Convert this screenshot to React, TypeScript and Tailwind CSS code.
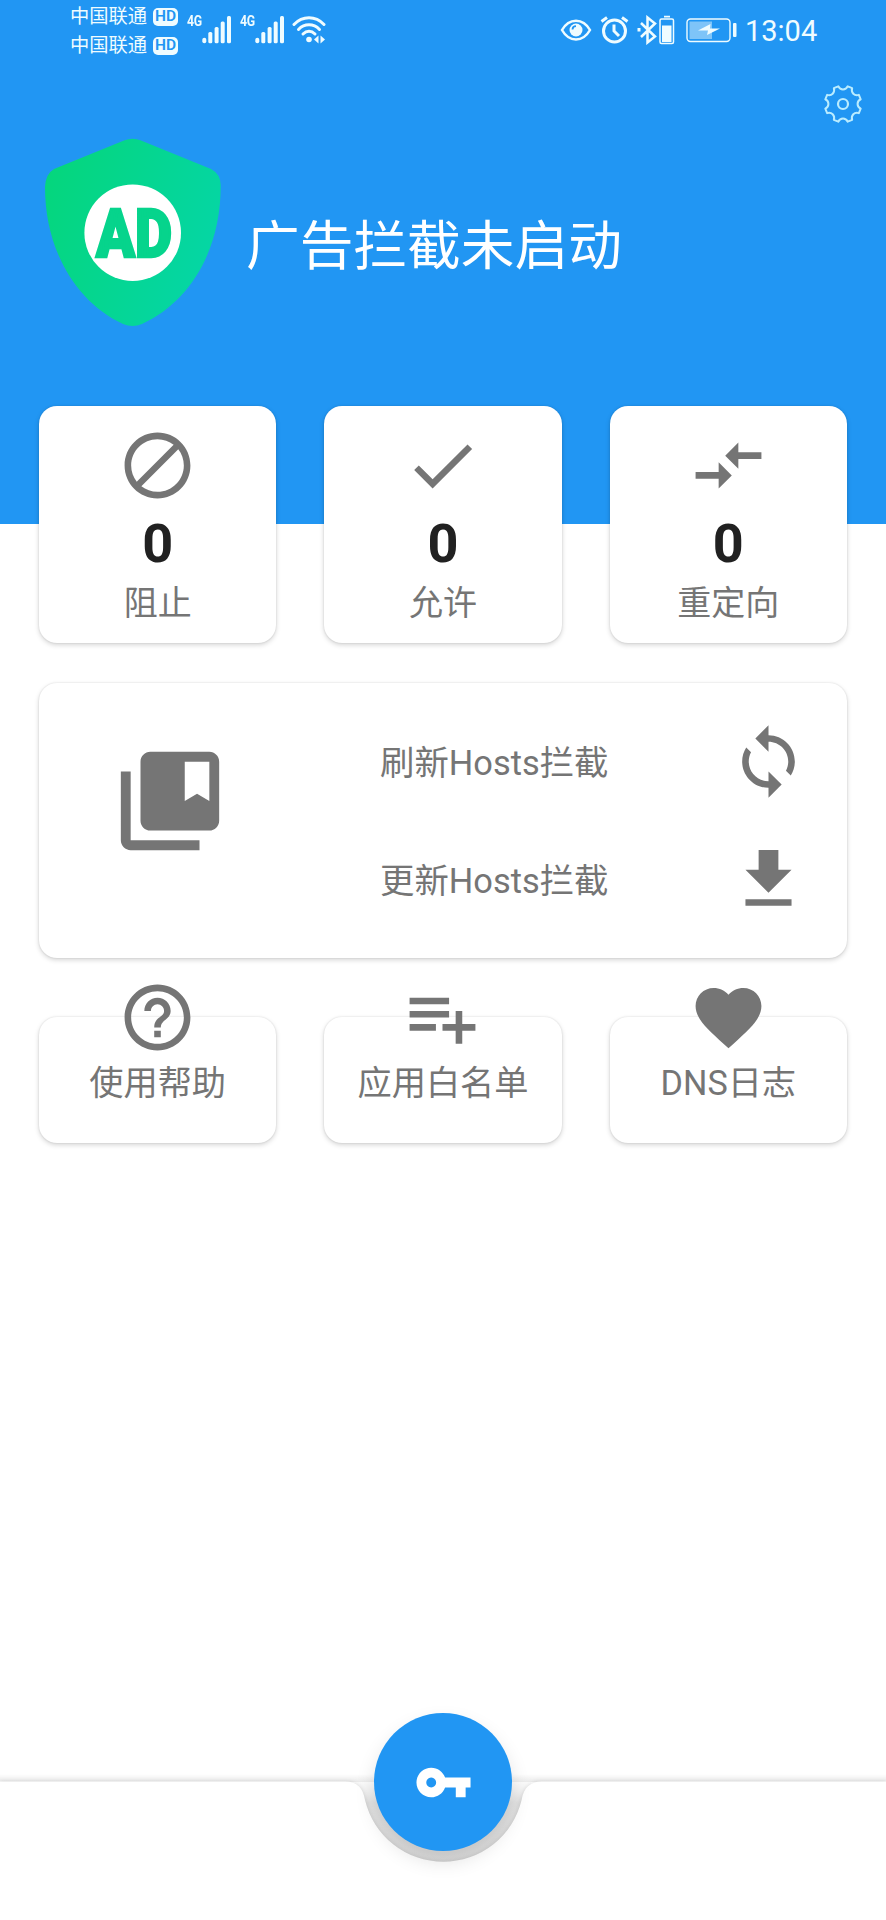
import React from 'react';

const FONT = "font-[Roboto,'Noto_Sans_CJK_SC',sans-serif]";
const CARD = 'bg-white rounded-[18px] shadow-[0_0_2px_rgba(0,0,0,0.12),0_2px_5px_rgba(0,0,0,0.17)]';

const PATHS = {
    block: 'M12 2C6.48 2 2 6.48 2 12s4.48 10 10 10 10-4.48 10-10S17.52 2 12 2zM4 12c0-4.42 3.58-8 8-8 1.85 0 3.55.63 4.9 1.69L5.69 16.9C4.63 15.55 4 13.85 4 12zm8 8c-1.85 0-3.55-.63-4.9-1.69L18.31 7.1C19.37 8.45 20 10.15 20 12c0 4.42-3.58 8-8 8z',
    check: 'M9 16.2L4.8 12l-1.4 1.4L9 19 21 7l-1.4-1.4L9 16.2z',
    compare: 'M9.01 14H2v2h7.01v3L13 15l-3.99-4v3zm5.98-1v-3H22V8h-7.01V5L11 9l3.99 4z',
    bookmarks:
        'M4 6H2v14c0 1.1.9 2 2 2h14v-2H4V6zm16-4H8c-1.1 0-2 .9-2 2v12c0 1.1.9 2 2 2h12c1.1 0 2-.9 2-2V4c0-1.1-.9-2-2-2zm0 10l-2.5-1.5L15 12V4h5v8z',
    sync: 'M12 4V1L8 5l4 4V6c3.31 0 6 2.69 6 6 0 1.01-.25 1.97-.7 2.8l1.46 1.46C19.54 15.03 20 13.57 20 12c0-4.42-3.58-8-8-8zm0 14c-3.31 0-6-2.69-6-6 0-1.01.25-1.97.7-2.8L5.24 7.74C4.46 8.97 4 10.43 4 12c0 4.42 3.58 8 8 8v3l4-4-4-4v3z',
    download: 'M19 9h-4V3H9v6H5l7 7 7-7zM5 18v2h14v-2H5z',
    help: 'M11 18h2v-2h-2v2zm1-16C6.48 2 2 6.48 2 12s4.48 10 10 10 10-4.48 10-10S17.52 2 12 2zm0 18c-4.41 0-8-3.59-8-8s3.59-8 8-8 8 3.59 8 8-3.59 8-8 8zm0-14c-2.21 0-4 1.79-4 4h2c0-1.1.9-2 2-2s2 .9 2 2c0 2-3 1.75-3 5h2c0-2.25 3-2.5 3-5 0-2.21-1.79-4-4-4z',
    playlistAdd: 'M14 10H2v2h12v-2zm0-4H2v2h12V6zm4 8v-4h-2v4h-4v2h4v4h2v-4h4v-2h-4zM2 16h8v-2H2v2z',
    heart: 'M12 21.35l-1.45-1.32C5.4 15.36 2 12.28 2 8.5 2 5.42 4.42 3 7.5 3c1.74 0 3.41.81 4.5 2.09C13.09 3.81 14.76 3 16.5 3 19.58 3 22 5.42 22 8.5c0 3.78-3.4 6.86-8.55 11.54L12 21.35z',
    key: 'M12.65 10C11.83 7.67 9.61 6 7 6c-3.31 0-6 2.69-6 6s2.69 6 6 6c2.61 0 4.83-1.67 5.65-4H17v4h4v-4h2v-4H12.65zM7 14c-1.1 0-2-.9-2-2s.9-2 2-2 2 .9 2 2-.9 2-2 2z',
};

const Icon = ({ name, className = 'size-[79px]' }: { name: keyof typeof PATHS; className?: string }) => (
    <svg viewBox="0 0 24 24" fill="currentColor" className={`shrink-0 ${className}`}>
        <path d={PATHS[name]} />
    </svg>
);

// eight rounded teeth with scooped gaps between them
const gearPath = () => {
    const point = (deg: number, r: number) => {
        const a = (deg * Math.PI) / 180;
        return `${(20 + r * Math.sin(a)).toFixed(2)} ${(20 - r * Math.cos(a)).toFixed(2)}`;
    };
    let d = `M${point(15, 18.3)}`;
    for (let k = 0; k < 8; k++) {
        const base = k * 45;
        d += ` L${point(base + 30, 18.3)}`;
        d += ` C${point(base + 34, 13.8)} ${point(base + 56, 13.8)} ${point(base + 60, 18.3)}`;
    }
    return `${d}Z`;
};

const Signal = () => (
    <div className="flex w-[45px]">
        <span className="-mt-1 w-[15px] text-[15px] font-bold leading-5 tracking-[-0.5px]">
            <span className="inline-block origin-left scale-x-[.82]">4G</span>
        </span>
        <svg width="30" height="30" viewBox="15 0 30 30" fill="currentColor" className="shrink-0">
            <rect x="15.3" y="22.7" width="4" height="5.6" rx="2" />
            <rect x="21.3" y="17" width="4" height="11.3" rx="1.5" />
            <rect x="27.6" y="12" width="4" height="16.3" rx="1.5" />
            <rect x="33.7" y="6.6" width="4" height="21.7" rx="1.5" />
            <rect x="40" y="1" width="4" height="27.3" rx="1.5" />
        </svg>
    </div>
);

const StatusBar = () => (
    <div className="flex h-[60px] pl-[70px] text-[#effcff]">
        <div className="flex flex-col gap-px pt-[3px]">
            {[1, 2].map((sim) => (
                <div key={sim} className="flex h-7 items-center">
                    <span className="w-[83px] text-[19.3px] leading-7">中国联通</span>
                    <span className="flex h-[17.5px] w-[25px] items-center justify-center rounded-[5px] bg-[#effcff] text-[15.5px] font-semibold leading-none text-[#2196f3]">
                        HD
                    </span>
                </div>
            ))}
        </div>
        <div className="ml-[9px] flex gap-2 pt-[15px]">
            <Signal />
            <Signal />
        </div>
        <svg className="ml-[7px] mt-[15px]" width="34" height="30" viewBox="0 0 34 30" fill="none" stroke="currentColor" strokeWidth="3" strokeLinecap="round">
            <path d="M2 9.5C10.500 .5 23.500 .5 32 9.500" />
            <path d="M6.500 14.500C12.500 8.300 21.500 8.300 27.500 14.500" />
            <path d="M11 19C14.800 15.200 19.200 15.200 23 19" />
            <circle cx="17" cy="24.500" r="2.800" fill="currentColor" stroke="none" />
            <path d="M22 24.500l4.500-4v8zM33 24.500l-4.500-4v8z" fill="currentColor" stroke="none" />
        </svg>
        <svg className="ml-[234px] mt-[15px]" width="115" height="30" viewBox="0 0 115 30" fill="none" stroke="currentColor" strokeWidth="2.500">
            <path d="M2 15C9 2.500 23 2.500 30 15C23 27.500 9 27.500 2 15Z" />
            <circle cx="16" cy="15" r="6.500" fill="currentColor" stroke="none" />
            <path d="M12.500 14.500A3.500 3.500 0 0 1 16 11.200" stroke="#2196f3" strokeWidth="1.800" />
            <circle cx="54.500" cy="16" r="11" strokeWidth="3" />
            <path d="M54 9.500V16l5 5M41.500 6.500l5.500-4M67.500 6.500l-5.500-4" strokeWidth="3" />
            <path d="M81 8l14 13.500-7.500 6V2.500l7.500 6L81 22" />
            <path d="M77.500 13h3v3.500h-3z" fill="currentColor" stroke="none" />
            <rect x="100" y="4" width="13.500" height="24.500" rx="1.500" strokeWidth="1.500" />
            <path d="M104 .7h6v1.800h-6zM102 10.500h9.500v16.500H102z" fill="currentColor" stroke="none" />
        </svg>
        <svg className="ml-[10px] mt-[15px]" width="52" height="30" viewBox="0 0 52 30" fill="currentColor">
            <rect x="2" y="4" width="43" height="22.500" rx="3.500" fill="none" stroke="currentColor" strokeWidth="1.400" />
            <rect x="4.500" y="6.500" width="22.500" height="17.500" opacity=".45" />
            <path d="M13 15.500l12.500-6.500-.5 4.500h10l-13 6.500 1-4.500z" />
            <rect x="48" y="8" width="3.500" height="14" rx="1" />
        </svg>
        <span className="ml-[8px] pt-[14px] text-[29px] leading-[34px]">13:04</span>
    </div>
);

const Shield = () => (
    <svg width="178" height="190" viewBox="0 0 178 190" className="shrink-0">
        <defs>
            <linearGradient id="shield" x1="0" y1=".2" x2="1" y2=".6">
                <stop offset="0" stopColor="#05d67c" />
                <stop offset="1" stopColor="#05d6a6" />
            </linearGradient>
        </defs>
        <path
            d="M80 2.500Q88.700-1 97 2.500L167 31Q176.500 36 176.700 47C177 112 146 164 98 186Q88.700 190 79 186C32 164 1 112 1 49Q1.500 36 10 31Z"
            fill="url(#shield)"
        />
        <circle cx="88.700" cy="94.700" r="48.300" fill="#fff" />
        <text x="52" y="118.500" fontSize="67" fontWeight="900" fill="#06d48c" stroke="#06d48c" strokeWidth="2.500" textLength="76" lengthAdjust="spacingAndGlyphs">
            AD
        </text>
    </svg>
);

const App = () => {
    const stats: { icon: keyof typeof PATHS; count: number; label: string }[] = [
        { icon: 'block', count: 0, label: '阻止' },
        { icon: 'check', count: 0, label: '允许' },
        { icon: 'compare', count: 0, label: '重定向' },
    ];

    const hostActions: { icon: keyof typeof PATHS; label: string }[] = [
        { icon: 'sync', label: '刷新Hosts拦截' },
        { icon: 'download', label: '更新Hosts拦截' },
    ];

    const links: { icon: keyof typeof PATHS; label: string }[] = [
        { icon: 'help', label: '使用帮助' },
        { icon: 'playlistAdd', label: '应用白名单' },
        { icon: 'heart', label: 'DNS日志' },
    ];

    return (
        <div className={`flex h-[1920px] w-[886px] flex-col overflow-hidden bg-white text-[#757575] ${FONT}`}>
            <header className="h-[524px] shrink-0 bg-[#2196f3] text-white">
                <StatusBar />
                <div className="flex justify-end pr-[23px] pt-6">
                    <svg width="40" height="40" viewBox="0 0 40 40" fill="none" stroke="#b9ecff" strokeWidth="2">
                        <path d={gearPath()} strokeLinejoin="round" />
                        <circle cx="20" cy="20" r="5" strokeWidth="2.200" />
                    </svg>
                </div>
                <div className="mt-[14px] flex pl-[44px]">
                    <Shield />
                    <h1 className="ml-6 mt-[69px] text-[53.700px] leading-[80px]">广告拦截未启动</h1>
                </div>
            </header>

            <main className="relative -mt-[118px] flex flex-col px-[39px]">
                <section className="grid grid-cols-3 gap-x-[48px]">
                    {stats.map((item) => (
                        <div key={item.label} className={`flex h-[237px] flex-col items-center pt-5 ${CARD}`}>
                            <Icon name={item.icon} />
                            <span className="mt-[7px] text-[54px] font-bold leading-[64px] text-[#212121]">{item.count}</span>
                            <span className="mt-[2px] text-[34px] leading-[50px]">{item.label}</span>
                        </div>
                    ))}
                </section>

                <section className={`mt-[40px] flex h-[275px] pl-[72px] ${CARD}`}>
                    <Icon name="bookmarks" className="mt-[58.500px] size-[118px]" />
                    <div className="ml-[151px] mt-[39px] flex flex-1 flex-col gap-[39px] pr-[39px]">
                        {hostActions.map((item) => (
                            <div key={item.label} className="flex h-[79px] items-center justify-between">
                                <span className="pt-[2px] text-[34.400px] leading-[50px]">{item.label}</span>
                                <Icon name={item.icon} />
                            </div>
                        ))}
                    </div>
                </section>

                <section className="mt-[59px] grid grid-cols-3 gap-x-[48px]">
                    {links.map((item) => (
                        <div key={item.label} className={`flex h-[126px] flex-col items-center ${CARD}`}>
                            <Icon name={item.icon} className="-mt-[39.500px] size-[79px]" />
                            <span className="pt-px text-[34.200px] leading-[50px]">{item.label}</span>
                        </div>
                    ))}
                </section>
            </main>

            <footer className="relative mt-auto h-[220px] shrink-0">
                <svg width="886" height="220" viewBox="0 0 886 220">
                    <defs>
                        <linearGradient id="notch" x1="0" y1="0" x2="0" y2="1">
                            <stop offset="0" stopColor="#f0f0f0" stopOpacity="0" />
                            <stop offset=".3" stopColor="#e2e2e2" />
                            <stop offset="1" stopColor="#dedede" />
                        </linearGradient>
                        <linearGradient id="edge" x1="0" y1="0" x2="0" y2="1">
                            <stop offset="0" stopColor="#000" stopOpacity="0" />
                            <stop offset="1" stopColor="#000" stopOpacity=".08" />
                        </linearGradient>
                    </defs>
                    <rect x="0" y="74" width="886" height="8" fill="url(#edge)" />
                    <rect x="355" y="76" width="176" height="90" fill="url(#notch)" />
                    <path
                        d="M0 81.500H345C357 81.500 363 88 365 100A80.500 80.500 0 0 0 521.600 100C523.600 88 530 81.500 542 81.500H886V220H0Z"
                        fill="#fff"
                        className="drop-shadow-[0_0_2px_rgba(0,0,0,0.13)]"
                    />
                </svg>
                <button className="absolute left-[374px] top-[13px] flex size-[138px] items-center justify-center rounded-full bg-[#2196f3] text-white shadow-[0_10px_20px_rgba(0,0,0,0.12)]">
                    <Icon name="key" className="size-[59px]" />
                </button>
            </footer>
        </div>
    );
};

export default App;
